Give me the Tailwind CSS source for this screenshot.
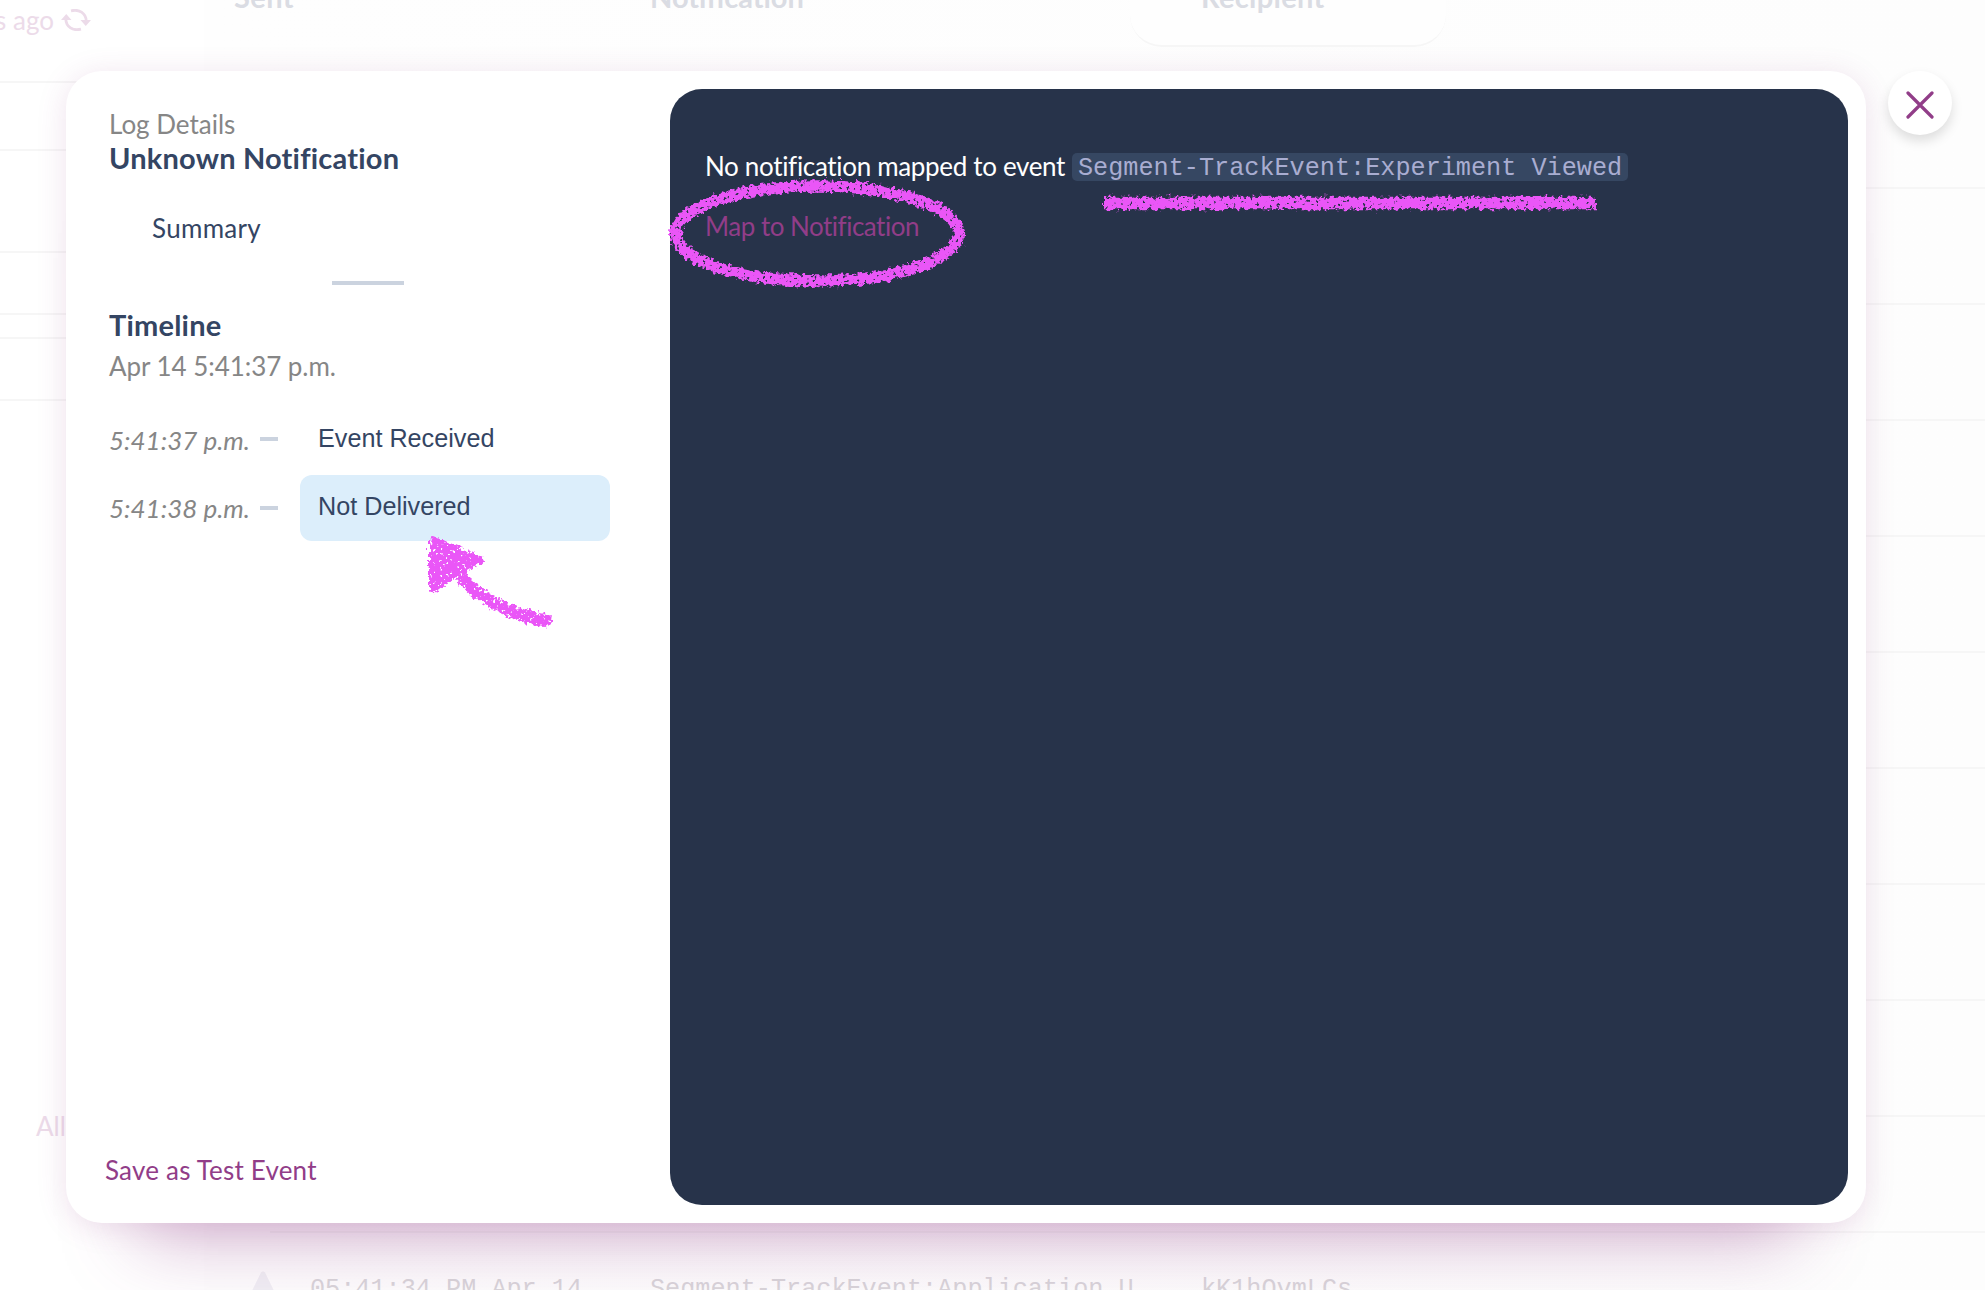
<!DOCTYPE html>
<html lang="en">
<head>
<meta charset="utf-8">
<title>Log Details</title>
<script src="https://cdn.jsdelivr.net/npm/@tailwindcss/browser@4"></script>
</head>
<body class="relative h-[1290px] w-[1985px] overflow-hidden bg-white font-['Lato',sans-serif] text-[26px] leading-8 text-[#344563] [font-variant-ligatures:none]">

<!-- Faded log table behind the dialog -->
<div class="flex h-[1290px] overflow-hidden">
  <aside class="flex w-[204px] shrink-0 flex-col text-[#ecdbe9]">
    <div class="flex h-[83px] items-start gap-[7px] border-b-2 border-[#f6f6f6] pt-[4px]">
      <span class="-ml-[8px] w-[62px] text-right whitespace-nowrap">s ago</span>
      <svg class="mt-[5px] h-[22px] w-[30px]" viewBox="0 0 30 22" fill="none" stroke="currentColor" stroke-width="2.8">
        <path d="M10 1.8C18 -.2 25 4 25.200 12"/><path d="M20 20.200C12 22.200 5 18 4.800 10"/>
        <path d="M19.500 11h10.500l-5.250 6z M0 11h10.500l-5.250-6z" fill="currentColor" stroke="none"/>
      </svg>
    </div>
    <div class="h-[68px] border-b-2 border-[#f6f6f6]"></div>
    <div class="h-[102px] border-b-2 border-[#f6f6f6]"></div>
    <div class="h-[62px] border-b-2 border-[#f6f6f6]"></div>
    <div class="h-[24px] border-b-2 border-[#f6f6f6]"></div>
    <div class="h-[62px] border-b-2 border-[#f6f6f6]"></div>
    <div class="mt-[709px] pl-[36px]">All</div>
  </aside>
  <main class="flex-1 bg-linear-to-r from-[#fefefe] to-[#fdfdfd] pl-[66px]">
    <div class="flex h-[189px] items-start border-b-2 border-[#f6f6f6] text-[29px] font-bold text-[#dadce3]">
      <span class="-ml-[36px] -mt-[19px] w-[416px] tracking-[0.4px]">Sent</span>
      <span class="-mt-[19px] w-[480px]">Notification</span>
      <div class="h-[47px] w-[316px] rounded-b-[32px] border-b-2 border-[#f6f6f6] bg-[#fefefe] pl-[71px]"><span class="-mt-[19px] block tracking-[0.3px]">Recipient</span></div>
    </div>
    <div class="h-[116px] border-b-2 border-[#f6f6f6]"></div>
    <div class="h-[116px] border-b-2 border-[#f6f6f6]"></div>
    <div class="h-[116px] border-b-2 border-[#f6f6f6]"></div>
    <div class="h-[116px] border-b-2 border-[#f6f6f6]"></div>
    <div class="h-[116px] border-b-2 border-[#f6f6f6]"></div>
    <div class="h-[116px] border-b-2 border-[#f6f6f6]"></div>
    <div class="h-[116px] border-b-2 border-[#f6f6f6]"></div>
    <div class="h-[116px] border-b-2 border-[#f6f6f6]"></div>
    <div class="h-[116px] border-b-2 border-[#f6f6f6]"></div>
    <div class="flex h-[116px] items-start pt-[38px] font-['Liberation_Mono',monospace] text-[25.200px] text-[#d9d6da]">
      <svg class="-ml-[22px] h-[34px] w-[30px] text-[#f1f0f5]" viewBox="0 0 30 34" fill="currentColor"><path d="M13 1.500q2-2 4 0L30 28H0z"/></svg>
      <span class="ml-[32px] w-[340px] pt-[3px]">05:41:34 PM Apr 14</span>
      <span class="w-[551px] pt-[3px]">Segment-TrackEvent:Application U</span>
      <span class="pt-[3px]">kK1hQvmLCs</span>
    </div>
  </main>
</div>

<!-- Dialog -->
<section class="absolute left-[66px] top-[71px] flex h-[1152px] w-[1800px] rounded-[36px] bg-white p-[18px] shadow-[0_4px_30px_rgba(145,61,136,0.15),0_90px_70px_-72px_rgba(145,61,136,0.36)]">
  <div class="flex w-[586px] flex-col pl-[25px] pt-[19px]">
    <p class="text-[#868686]">Log Details</p>
    <h1 class="text-[29px] leading-9 font-bold tracking-[0.2px]">Unknown Notification</h1>
    <p class="mt-[36px] pl-[43px] tracking-[0.3px]">Summary</p>
    <div class="mt-[37px] ml-[223px] h-1 w-[72px] bg-[#cbd3df]"></div>
    <h2 class="mt-[22px] text-[29px] leading-9 font-bold tracking-[0.2px]">Timeline</h2>
    <p class="mt-[7px] text-[#868686] tracking-[-0.05px]">Apr 14 5:41:37 p.m.</p>
    <div class="mt-[24px] flex h-[66px] items-center">
      <span class="w-[151px] pt-px text-[#868686] italic">5:41:37 p.m.</span>
      <span class="h-1 w-[18px] bg-[#cbd3df]"></span>
      <span class="ml-[22px] w-[310px] pb-[3px] pl-[18px] font-['Liberation_Sans',sans-serif] text-[25.200px]">Event Received</span>
    </div>
    <div class="mt-[3px] flex h-[66px] items-center">
      <span class="w-[151px] text-[#868686] italic">5:41:38 p.m.</span>
      <span class="-mt-px h-1 w-[18px] bg-[#cbd3df]"></span>
      <span class="ml-[22px] flex h-[66px] w-[310px] items-center rounded-xl bg-[#dceefb] pb-[4px] pl-[18px] font-['Liberation_Sans',sans-serif] text-[25.200px]">Not Delivered</span>
    </div>
    <a class="mt-auto mb-[19px] -ml-[4px] tracking-[0.2px] text-[#913d88]">Save as Test Event</a>
  </div>
  <div class="flex-1 rounded-[32px] bg-[#27334a] pl-[35px] pt-[63px]">
    <div class="flex items-center whitespace-nowrap text-white">
      <span class="-mt-[2px] w-[367px] tracking-[-0.33px]">No notification mapped to event</span>
      <code class="h-7 w-[556px] rounded-[5px] bg-[#364762] px-[6px] pt-[2px] font-['Liberation_Mono',monospace] text-[25.200px] leading-7 text-[#a9add1]">Segment-TrackEvent:Experiment Viewed</code>
    </div>
    <a class="mt-[28px] block tracking-[-0.5px] text-[#913d88]">Map to Notification</a>
  </div>
</section>

<button class="absolute left-[1888px] top-[71px] flex size-16 items-center justify-center rounded-full bg-white shadow-[0_6px_12px_rgba(0,0,0,0.13)]">
  <svg class="mt-[3px] size-[28px]" viewBox="0 0 28 28" stroke="#913d88" stroke-width="3.200" stroke-linecap="round"><path d="M2 2l24 24M26 2L2 26"/></svg>
</button>

<!-- Crayon annotations -->
<svg class="pointer-events-none absolute inset-0 h-[1290px] w-[1985px]" viewBox="0 0 1985 1290" fill="none" stroke="#ea56f7">
  <defs>
    <filter id="crayon" filterUnits="userSpaceOnUse" x="400" y="160" width="1250" height="500" color-interpolation-filters="sRGB">
      <feTurbulence type="fractalNoise" baseFrequency="0.25" numOctaves="2" seed="4" result="n"/>
      <feDisplacementMap in="SourceGraphic" in2="n" scale="9" xChannelSelector="R" yChannelSelector="G" result="d"/>
      <feTurbulence type="fractalNoise" baseFrequency="0.3" numOctaves="2" seed="9"/>
      <feColorMatrix values="0 0 0 0 0  0 0 0 0 0  0 0 0 0 0  10 0 0 0 -6.400" result="holes"/>
      <feComposite in="d" in2="holes" operator="out"/>
    </filter>
  </defs>
  <g filter="url(#crayon)">
    <ellipse cx="817" cy="233.500" rx="141.500" ry="47.500" stroke-width="11.500"/>
    <path d="M1104 203H1596" stroke-width="12.500"/>
    <path d="M433 540L479 560L456 573L433 589Z" fill="#ea56f7" stroke-width="8" stroke-linejoin="round"/>
    <path d="M456 571C476 598 512 616 551 621" stroke-width="12"/>
  </g>
</svg>
</body>
</html>
